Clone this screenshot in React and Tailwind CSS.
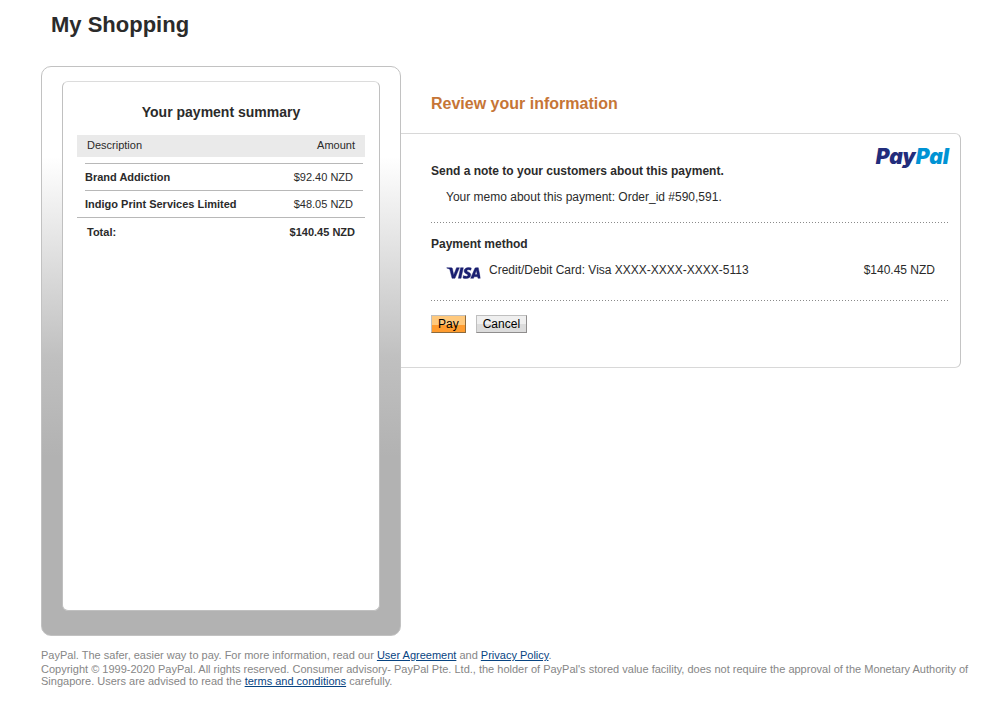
import { SiVisa } from "react-icons/si";

const items = [
  { name: "Brand Addiction", amount: "$92.40 NZD" },
  { name: "Indigo Print Services Limited", amount: "$48.05 NZD" },
];

function Divider() {
  return (
    <div className="h-px bg-[repeating-linear-gradient(90deg,#8a8a8a_0_1px,transparent_1px_3px)]" />
  );
}

function PayPalLogo() {
  return (
    <div className="pt-px font-['Inter',sans-serif] text-[21px] leading-6 font-black italic text-[#222d7c] [font-feature-settings:'cv11']">
      Pay<span className="text-[#0093d4]">Pal</span>
    </div>
  );
}

function PaymentSummary() {
  return (
    <aside className="flex w-[360px] shrink-0 flex-col rounded-[10px] border border-[#c2c2c2] bg-[linear-gradient(180deg,#fff_90px,#dedede_194px,#c0c0c0_290px,#b2b2b2_390px)] px-5 pt-3.5 pb-6">
      <div className="min-h-[530px] rounded-md border border-[#c0c0c0] border-t-[#dcdcdc] bg-white px-3.5 pt-5">
        <h2 className="text-center text-sm leading-5 font-bold">Your payment summary</h2>
        <table className="mt-[13px] w-full border-separate border-spacing-0 text-[11px] leading-[22px]">
          <thead className="leading-5">
            <tr className="bg-[#eaeaea]">
              <th scope="col" className="pb-0.5 pl-2.5 text-left font-normal">Description</th>
              <th scope="col" className="pr-2.5 pb-0.5 text-right font-normal">Amount</th>
            </tr>
          </thead>
          <tbody>
            <tr aria-hidden="true">
              <td colSpan="2" className="h-1.5 p-0" />
            </tr>
            {items.map((item) => (
              <tr key={item.name}>
                <th scope="row" className="pl-2 text-left font-bold">
                  <div className="border-t border-[#b8b8b8] py-0.5">{item.name}</div>
                </th>
                <td className="pr-0.5 text-right">
                  <div className="border-t border-[#b8b8b8] py-0.5 pr-2.5">{item.amount}</div>
                </td>
              </tr>
            ))}
          </tbody>
          <tfoot>
            <tr className="font-bold">
              <th scope="row" className="border-t border-[#b8b8b8] py-[3px] pl-2.5 text-left">Total:</th>
              <td className="border-t border-[#b8b8b8] py-[3px] pr-2.5 text-right">$140.45 NZD</td>
            </tr>
          </tfoot>
        </table>
      </div>
    </aside>
  );
}

function Review() {
  return (
    <main className="min-w-0 flex-1 pt-7">
      <h2 className="pl-[30px] text-base leading-5 font-bold text-[#c67536]">
        Review your information
      </h2>
      <div className="mt-[19px] rounded-r-md border border-l-0 border-[#d8d8d8] border-r-[#c4c4c4] pt-2.5 pr-[11px] pb-[34px] pl-[30px] text-xs leading-4">
        <div className="flex items-start justify-between">
          <h3 className="pt-[19px] font-bold">Send a note to your customers about this payment.</h3>
          <PayPalLogo />
        </div>
        <p className="mt-2.5 mb-[17px] pl-[15px]">Your memo about this payment: Order_id #590,591.</p>
        <Divider />
        <h3 className="mt-[13px] font-bold">Payment method</h3>
        <div className="mt-2.5 mb-[22px] flex items-start pr-3.5 pl-[15px]">
          <svg aria-label="Visa" role="img" viewBox="0 0 34 22" className="mr-2 -mb-1.5 h-[22px] w-[35px]">
            <SiVisa x="0" y="-6" size="34" color="#1a1f71" stroke="#1a1f71" strokeWidth="0.3" />
          </svg>
          <span>Credit/Debit Card: Visa XXXX-XXXX-XXXX-5113</span>
          <span className="ml-auto">$140.45 NZD</span>
        </div>
        <Divider />
        <div className="mt-3.5 flex gap-2.5 text-black">
          <button
            type="button"
            className="border border-[#bfbfbf] border-r-[#8c6a3c] border-b-[#8c6a3c] bg-[linear-gradient(180deg,#ffc97d_55%,#ff9c2f_55%)] px-1.5"
          >
            Pay
          </button>
          <button
            type="button"
            className="border border-[#bfbfbf] border-r-[#8f8d8d] border-b-[#8f8d8d] bg-[linear-gradient(180deg,#efefef_50%,#dcdcdc_50%)] px-1.5"
          >
            Cancel
          </button>
        </div>
      </div>
    </main>
  );
}

function TextLink({ children }) {
  return (
    <a href="#" className="text-[#084482] underline">
      {children}
    </a>
  );
}

export default function App() {
  return (
    <div className="min-h-screen bg-white pr-[45px] pl-[41px] font-['Liberation_Sans',Arial,sans-serif] text-[#2b2b2b]">
      <header className="pt-[13px] pb-[29px] pl-2.5">
        <h1 className="text-[22px] leading-6 font-bold">My Shopping</h1>
      </header>
      <div className="flex items-start">
        <PaymentSummary />
        <Review />
      </div>
      <footer className="-mr-4 pt-[13px] pb-4 text-[11px] leading-3 text-[#868686]">
        <p>
          PayPal. The safer, easier way to pay. For more information, read our{" "}
          <TextLink>User Agreement</TextLink> and <TextLink>Privacy Policy</TextLink>.
        </p>
        <p className="mt-0.5">
          Copyright © 1999-2020 PayPal. All rights reserved. Consumer advisory- PayPal Pte. Ltd., the
          holder of PayPal's stored value facility, does not require the approval of the Monetary
          Authority of Singapore. Users are advised to read the{" "}
          <TextLink>terms and conditions</TextLink> carefully.
        </p>
      </footer>
    </div>
  );
}
